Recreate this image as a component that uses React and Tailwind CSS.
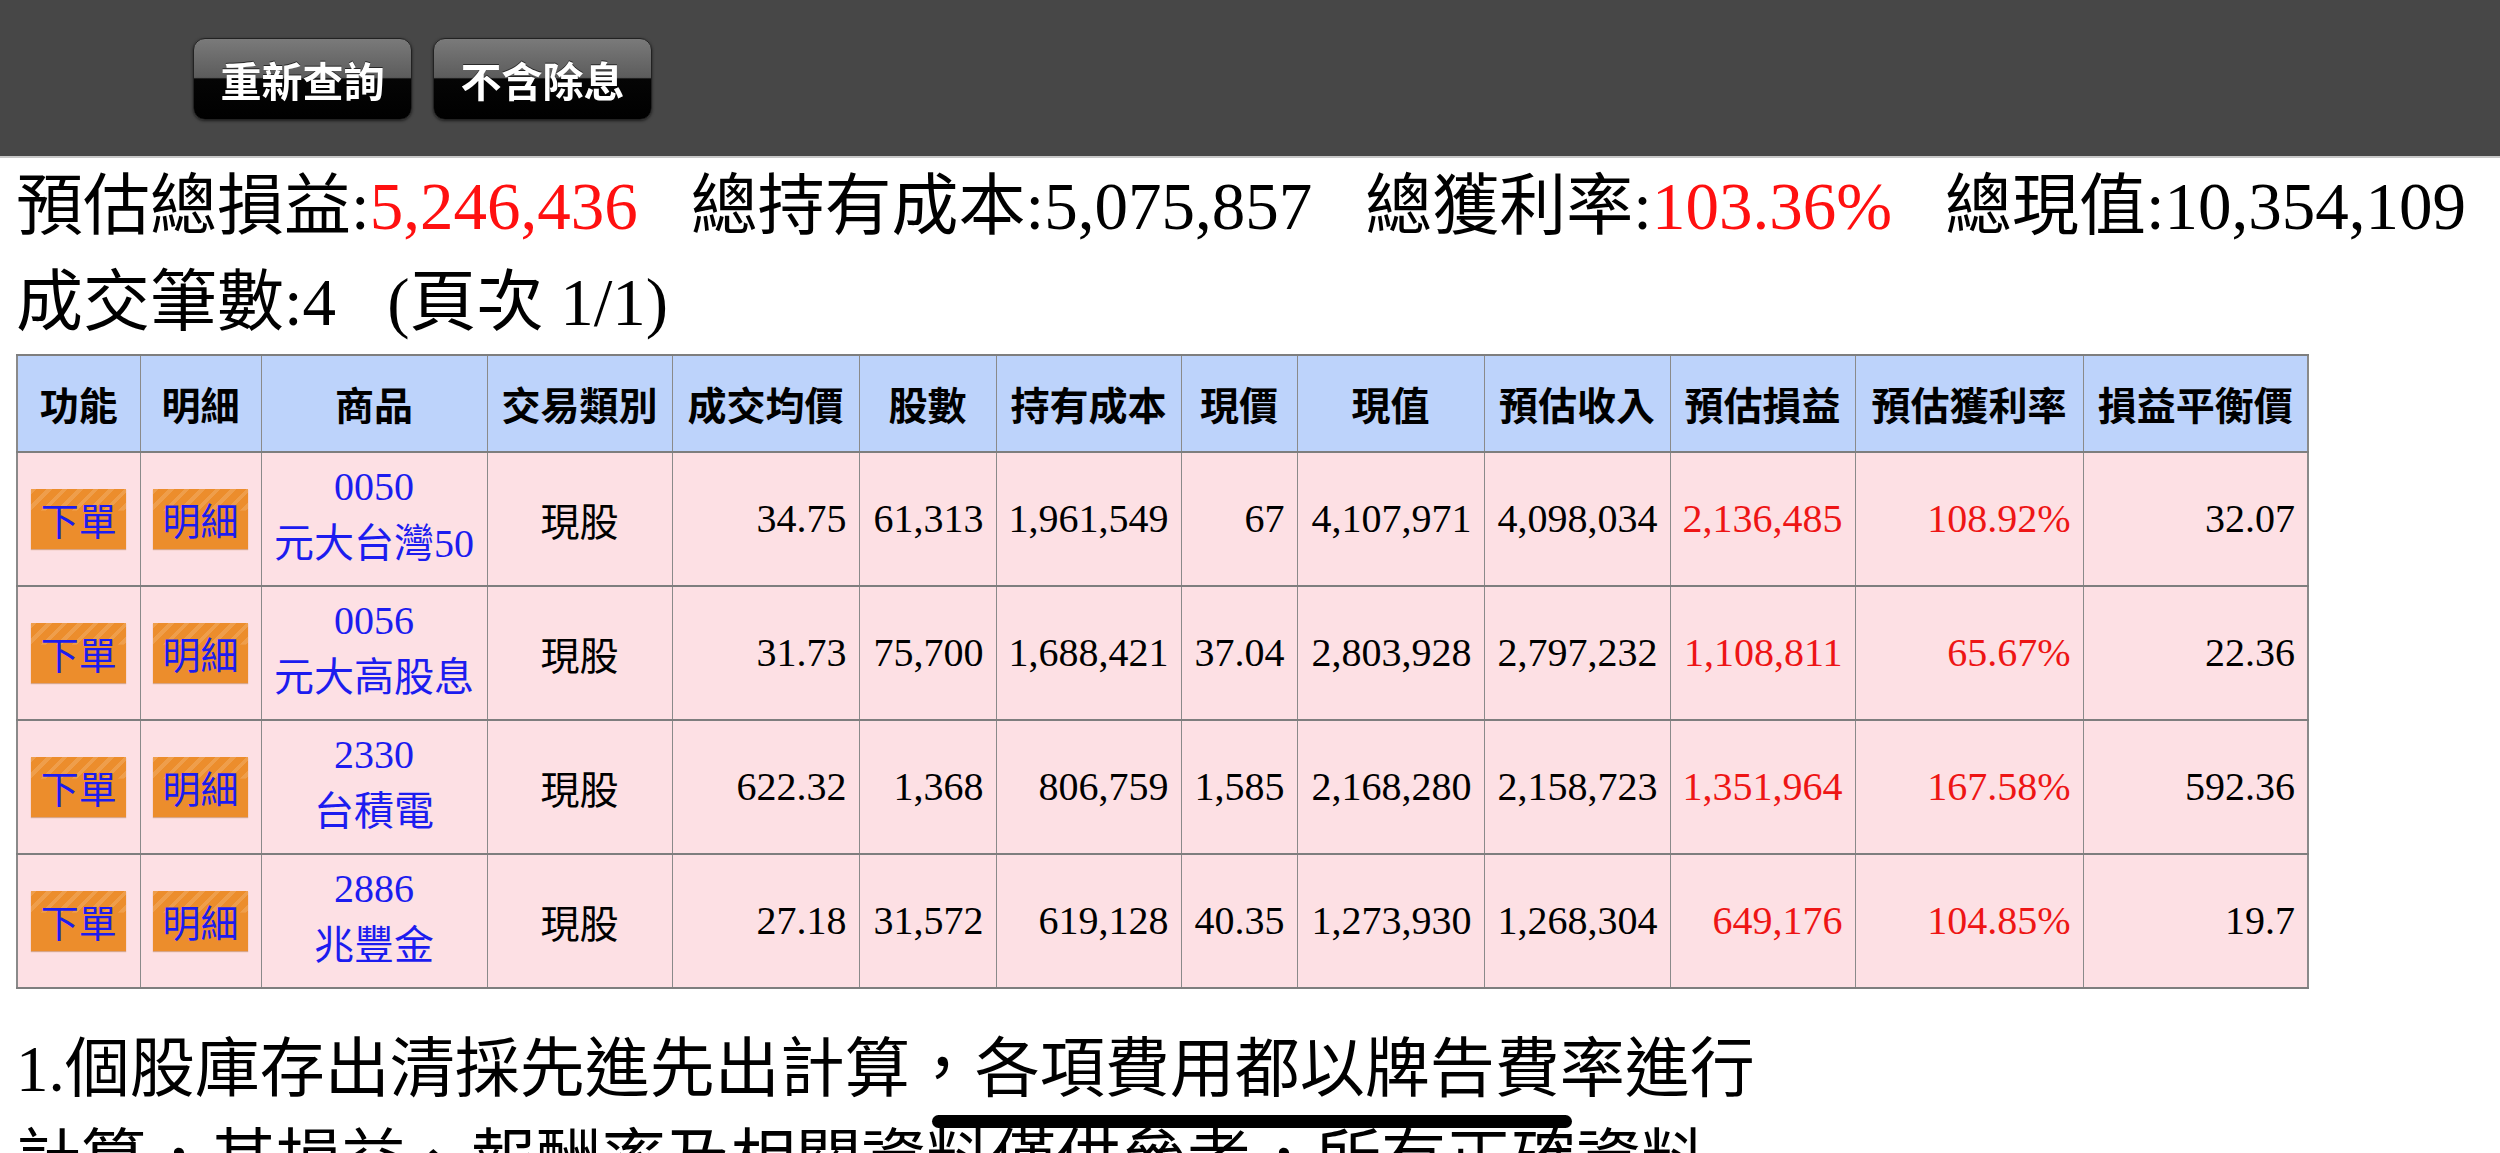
import React from "react";

const rows = [
  { code: "0050", name: "元大台灣50", avg: "34.75", qty: "61,313", cost: "1,961,549", price: "67", value: "4,107,971", income: "4,098,034", pl: "2,136,485", rate: "108.92%", be: "32.07" },
  { code: "0056", name: "元大高股息", avg: "31.73", qty: "75,700", cost: "1,688,421", price: "37.04", value: "2,803,928", income: "2,797,232", pl: "1,108,811", rate: "65.67%", be: "22.36" },
  { code: "2330", name: "台積電", avg: "622.32", qty: "1,368", cost: "806,759", price: "1,585", value: "2,168,280", income: "2,158,723", pl: "1,351,964", rate: "167.58%", be: "592.36" },
  { code: "2886", name: "兆豐金", avg: "27.18", qty: "31,572", cost: "619,128", price: "40.35", value: "1,273,930", income: "1,268,304", pl: "649,176", rate: "104.85%", be: "19.7" },
];

const headers = ["功能", "明細", "商品", "交易類別", "成交均價", "股數", "持有成本", "現價", "現值", "預估收入", "預估損益", "預估獲利率", "損益平衡價"];

function GlossButton({ children }) {
  return (
    <div className="w-[219px] h-[82px] rounded-[12px] border border-[#222] shadow-[0_1px_3px_rgba(0,0,0,0.6)] bg-[linear-gradient(to_bottom,#7a7a7a_0%,#5c5c5c_48%,#050505_50%,#000_100%)] flex items-center justify-center">
      <span className="text-white font-bold text-[41px] leading-none font-['Noto_Sans_CJK_TC',sans-serif] drop-shadow-[0_-1px_0_rgba(0,0,0,0.6)]">
        {children}
      </span>
    </div>
  );
}

function OrangeButton({ children }) {
  return (
    <div className="mx-auto w-[95px] h-[60px] bg-[#ec8d2c] bg-[repeating-linear-gradient(135deg,rgba(255,255,255,0.15)_0px,rgba(255,255,255,0.15)_4px,transparent_4px,transparent_11px)] bg-[length:100%_36%] bg-no-repeat shadow-[0_1px_1px_rgba(160,80,0,0.4)] flex items-center justify-center">
      <span className="text-[#1c1cef] text-[38px] leading-none font-['Noto_Sans_CJK_TC',sans-serif]">{children}</span>
    </div>
  );
}

const tdBase = "h-[134px] bg-[#fde0e4] border-x border-y-2 border-x-[#8a8a8a] border-y-[#7e7e7e] p-0";
const num = tdBase + " text-right pr-[12px] text-[40px] leading-none whitespace-nowrap";
const red = num + " text-[#ee1515]";

export default function App() {
  return (
    <div className="relative w-[2500px] min-h-[1153px] bg-white font-['Liberation_Serif','Noto_Sans_CJK_TC',serif] text-black">
      {/* top bar */}
      <div className="h-[158px] bg-[#474747] border-b-2 border-[#c8c8c8] flex items-start pl-[193px] pt-[38px] gap-[21px]">
        <GlossButton>重新查詢</GlossButton>
        <GlossButton>不含除息</GlossButton>
      </div>

      <div className="px-[16px]">
        {/* summary */}
        <div className="text-[67px] leading-[96px] whitespace-nowrap">
          <span>預估總損益:</span>
          <span className="text-[#ff1010]">5,246,436</span>
          <span className="ml-[53px]">總持有成本:</span>
          <span>5,075,857</span>
          <span className="ml-[53px]">總獲利率:</span>
          <span className="text-[#ff1010]">103.36%</span>
          <span className="ml-[53px]">總現值:</span>
          <span>10,354,109</span>
        </div>
        <div className="text-[67px] leading-[96px] whitespace-nowrap">
          <span>成交筆數:4</span>
          <span className="ml-[51px]">(頁次 1/1)</span>
        </div>

        {/* table */}
        <table className="mt-[4px] table-fixed border-collapse border-2 border-[#8a8a8a] w-[2291px]">
          <colgroup>
            <col className="w-[123px]" />
            <col className="w-[121px]" />
            <col className="w-[226px]" />
            <col className="w-[185px]" />
            <col className="w-[187px]" />
            <col className="w-[137px]" />
            <col className="w-[185px]" />
            <col className="w-[116px]" />
            <col className="w-[187px]" />
            <col className="w-[186px]" />
            <col className="w-[185px]" />
            <col className="w-[228px]" />
            <col className="w-[225px]" />
          </colgroup>
          <thead>
            <tr>
              {headers.map((h) => (
                <th
                  key={h}
                  className="h-[97px] bg-[#bdd3fb] border-x border-y-2 border-x-[#8a8a8a] border-y-[#7e7e7e] p-0 text-center text-[39px] font-bold leading-none whitespace-nowrap font-['Noto_Sans_CJK_TC',sans-serif]"
                >
                  {h}
                </th>
              ))}
            </tr>
          </thead>
          <tbody>
            {rows.map((r) => (
              <tr key={r.code}>
                <td className={tdBase}>
                  <OrangeButton>下單</OrangeButton>
                </td>
                <td className={tdBase}>
                  <OrangeButton>明細</OrangeButton>
                </td>
                <td className={tdBase + " text-center text-[40px] leading-[57px] text-[#1c1cef] whitespace-nowrap"}>
                  <div className="-mt-[8px]">{r.code}</div>
                  <div>{r.name}</div>
                </td>
                <td className={tdBase + " text-center text-[39px] leading-none font-['Noto_Sans_CJK_TC',sans-serif]"}>現股</td>
                <td className={num}>{r.avg}</td>
                <td className={num}>{r.qty}</td>
                <td className={num}>{r.cost}</td>
                <td className={num}>{r.price}</td>
                <td className={num}>{r.value}</td>
                <td className={num}>{r.income}</td>
                <td className={red}>{r.pl}</td>
                <td className={red}>{r.rate}</td>
                <td className={num}>{r.be}</td>
              </tr>
            ))}
          </tbody>
        </table>

        {/* notes */}
        <p className="mt-[35px] w-[1740px] text-[65px] leading-[91px]">
          1.個股庫存出清採先進先出計算，各項費用都以牌告費率進行計算，其損益、報酬率及相關資料僅供參考，所有正確資料應以對帳單為準。
        </p>
      </div>

      {/* home indicator */}
      <div className="absolute top-[1115px] left-[932px] w-[640px] h-[13px] rounded-full bg-black" />
    </div>
  );
}
